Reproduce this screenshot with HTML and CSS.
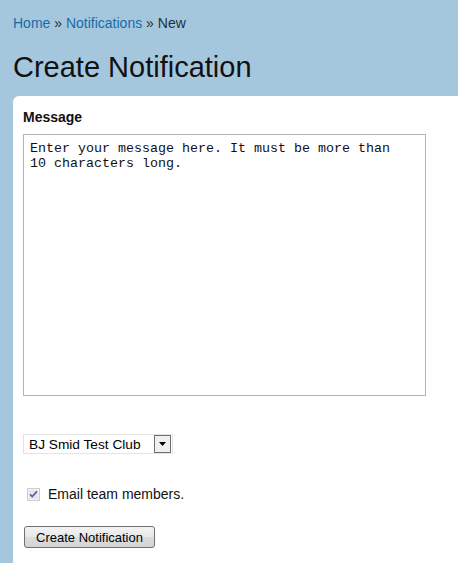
FILE: index.html
```html
<!DOCTYPE html>
<html>
<head>
<meta charset="utf-8">
<link rel="stylesheet" href="styles.css">
</head>
<body>
<div class="header">
  <div class="crumbs"><a href="#">Home</a> » <a href="#">Notifications</a> » New</div>
  <h1 class="title">Create Notification</h1>
</div>
<div class="card">
  <div class="label">Message</div>
  <textarea class="message">Enter your message here. It must be more than
10 characters long.</textarea>
  <div class="select">
    <span class="select-text">BJ Smid Test Club</span>
    <span class="select-arrow"><svg width="7" height="4" viewBox="0 0 7 4"><path d="M0 0H7L3.5 4Z" fill="#000"/></svg></span>
  </div>
  <label class="check-row">
    <svg class="check" width="13" height="13" viewBox="0 0 13 13">
      <rect x="0.5" y="0.5" width="12" height="12" fill="#f4f4f4" stroke="#9c9c9c" stroke-dasharray="1 1"/>
      <rect x="2" y="2" width="9" height="9" fill="#e6e6e6"/>
      <path d="M3 6.2L5.2 8.6L10 3.4" fill="none" stroke="#4a5fa8" stroke-width="1.6"/>
    </svg>
    <span>Email team members.</span>
  </label>
  <button class="submit">Create Notification</button>
</div>
</body>
</html>
```
FILE: styles.css
```css
html, body {
  margin: 0;
  padding: 0;
  background: #a5c7de;
  font-family: "Liberation Sans", Arial, sans-serif;
  height: 100%;
  overflow: hidden;
}
body {
  display: flex;
  flex-direction: column;
}
.header {
  padding: 15px 13px 0 13px;
}
.crumbs {
  font-size: 14px;
  line-height: 16px;
  color: #1f2f3a;
}
.crumbs a {
  color: #1a6aa6;
  text-decoration: none;
}
.title {
  margin: 20px 0 12px 0;
  font-size: 29px;
  line-height: 33px;
  font-weight: normal;
  color: #111;
}
.card {
  flex: 1;
  margin-left: 13px;
  background: #fff;
  border-top-left-radius: 6px;
  padding: 13px 10px 0 10px;
  display: flex;
  flex-direction: column;
  align-items: flex-start;
}
.label {
  font-size: 14px;
  line-height: 16px;
  font-weight: bold;
  color: #111;
}
.message {
  margin: 9px 0 0 0;
  width: 403px;
  height: 262px;
  box-sizing: border-box;
  border: 1px solid #b4b4b4;
  padding: 6px 6px;
  font-family: "Liberation Mono", "Courier New", monospace;
  font-size: 13.33px;
  line-height: 15px;
  color: #111;
  resize: none;
  outline: none;
}
.select {
  margin-top: 38px;
  width: 150px;
  height: 20px;
  box-sizing: border-box;
  border: 1px solid #e4e4e4;
  display: flex;
  align-items: center;
  justify-content: space-between;
  padding: 0 1px 0 5px;
}
.select-text {
  font-size: 13.7px;
  color: #000;
}
.select-arrow {
  width: 17px;
  height: 18px;
  box-sizing: border-box;
  border: 1px solid #6e6e6e;
  background: #f0f0f0;
  display: flex;
  align-items: center;
  justify-content: center;
}
.check-row {
  margin-top: 32px;
  margin-left: 4px;
  display: flex;
  align-items: center;
  gap: 8px;
  font-size: 14px;
  line-height: 16px;
  color: #111;
}
.check {
  display: block;
}
.submit {
  margin-top: 24px;
  margin-left: 1px;
  width: 131px;
  height: 22px;
  border: 1px solid #707070;
  border-radius: 3px;
  background: linear-gradient(#f3f3f3, #e8e8e8 50%, #dcdcdc 51%, #d4d4d4);
  font-family: "Liberation Sans", Arial, sans-serif;
  font-size: 13px;
  color: #000;
  padding: 0;
}
```
